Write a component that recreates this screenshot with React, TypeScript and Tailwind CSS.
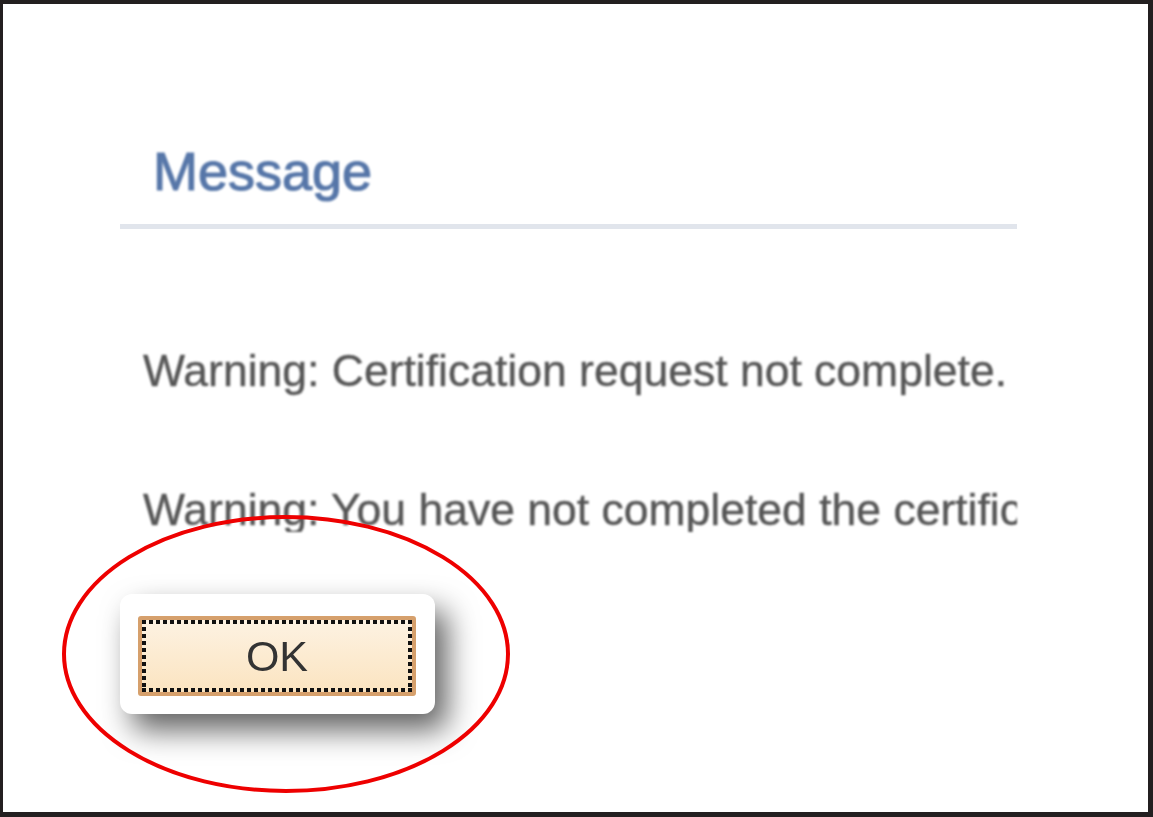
export default function App() {
  return (
    <div className="relative w-[1153px] h-[817px] overflow-hidden bg-white border-t-4 border-l-[3px] border-r-[5px] border-b-[5px] border-[#231f20] font-['Liberation_Sans',Arial,sans-serif]">
      <div className="pl-[117px] pt-[140px]">
        {/* Title */}
        <div className="w-[897px] border-b-[5px] border-[#e1e5ec] pb-[26px]">
          <h1 className="pl-[33px] text-[54px] leading-none font-normal text-[#5676a8] blur-[1px] [-webkit-text-stroke:1.2px_#5a7aab]">Message</h1>
        </div>

        {/* Messages */}
        <div className="w-[897px] overflow-hidden whitespace-nowrap pl-[23px] pt-[120px] text-[44.5px] leading-none text-[#555] blur-[1.2px] [-webkit-text-stroke:0.5px_#666]">
          <p>Warning: Certification request not complete.</p>
          <p className="mt-[94px]">Warning: You have not completed the certification request.</p>
        </div>

        {/* OK button card */}
        <div className="mt-[62px] w-[315px] h-[120px] rounded-[12px] bg-white pl-[18px] pt-[22px] shadow-[12px_16px_30px_rgba(0,0,0,0.62)]">
          <button className="w-[278px] h-[80px] rounded-[3px] border-4 border-[#d6a06c] bg-gradient-to-b from-[#fdf2e2] to-[#fbe4c0]">
            <span className="flex h-full w-full items-center justify-center bg-no-repeat [background-image:repeating-linear-gradient(90deg,#111_0_4px,transparent_4px_7px),repeating-linear-gradient(90deg,#111_0_4px,transparent_4px_7px),repeating-linear-gradient(180deg,#111_0_4px,transparent_4px_7px),repeating-linear-gradient(180deg,#111_0_4px,transparent_4px_7px)] [background-size:100%_4px,100%_4px,4px_100%,4px_100%] [background-position:0_0,0_100%,0_0,100%_0] text-[43px] leading-none text-[#333]">
              <span className="blur-[0.4px]">OK</span>
            </span>
          </button>
        </div>
      </div>

      {/* Red annotation ellipse */}
      <svg className="absolute left-0 top-0 pointer-events-none" width="1153" height="817">
        <ellipse cx="283" cy="650" rx="222" ry="137" fill="none" stroke="#ee0000" strokeWidth="4" />
      </svg>
    </div>
  );
}
